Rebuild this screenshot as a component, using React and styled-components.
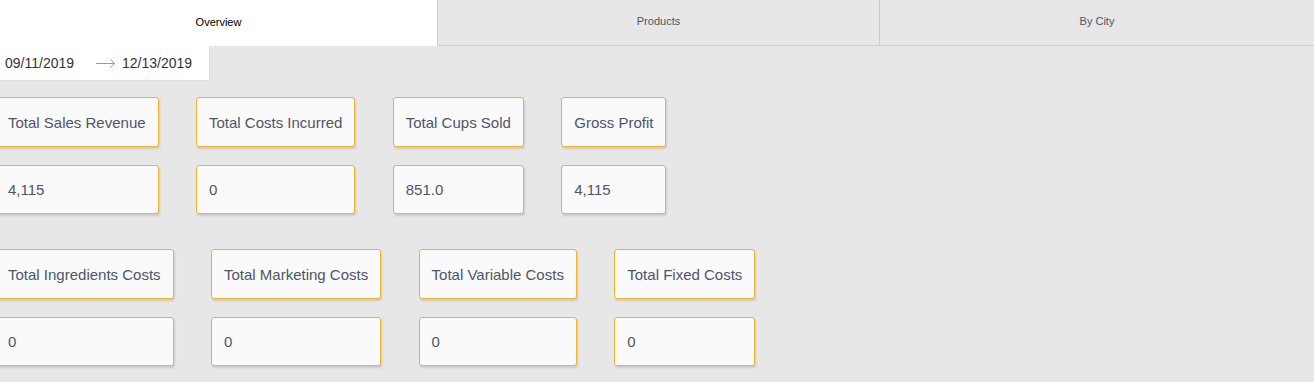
import React from "react";
import styled, { createGlobalStyle } from "styled-components";

const GlobalStyle = createGlobalStyle`
  html, body {
    margin: 0;
    padding: 0;
    background: #e6e7e6;
    font-family: "Liberation Sans", Arial, Helvetica, sans-serif;
    overflow: hidden;
  }
`;

const Page = styled.div`
  width: 1314px;
  height: 382px;
  background: #e6e7e6;
`;

const TabBar = styled.div`
  display: grid;
  grid-template-columns: 437px 442px 1fr;
  height: 46px;
`;

const Tab = styled.div`
  display: flex;
  align-items: center;
  justify-content: center;
  padding-bottom: 3px;
  box-sizing: border-box;
  font-size: 11px;
  color: ${(p) => (p.$active ? "#000" : "#4d5568")};
  background: ${(p) => (p.$active ? "#fff" : "#e6e7e6")};
  border-left: ${(p) => (p.$active ? "none" : "1px solid #f1d24e")};
  border-bottom: ${(p) => (p.$active ? "none" : "1px solid #f1d24e")};
`;

const Content = styled.div`
  margin-left: -5px;
  display: flex;
  flex-direction: column;
  align-items: flex-start;
`;

const DatePicker = styled.div`
  display: flex;
  align-items: center;
  width: 215px;
  height: 35px;
  box-sizing: border-box;
  padding: 0 10px;
  background: #fff;
  border: 1px solid #dcdcdc;
  border-left: none;
  border-top: none;
  font-size: 14px;
  color: #333;
`;

const Arrow = styled.svg`
  margin: 0 6px 0 22px;
  flex: none;
`;

const Groups = styled.div`
  display: flex;
  flex-direction: column;
  gap: 35px;
  margin-top: 16px;
`;

const Group = styled.div`
  display: flex;
  gap: 37.4px;
`;

const Column = styled.div`
  display: flex;
  flex-direction: column;
  gap: 18px;
`;

const Card = styled.div`
  box-sizing: border-box;
  height: ${(p) => (p.$value ? "49px" : "50px")};
  display: flex;
  align-items: center;
  padding: 0 12px;
  background: #fafafa;
  border: 1px solid #efb42c;
  border-radius: 3px;
  box-shadow: 1px 2px 2px rgba(0, 0, 0, 0.12);
  font-size: 15px;
  color: #4e5569;
  white-space: nowrap;
`;

const groups = [
  [
    ["Total Sales Revenue", "4,115"],
    ["Total Costs Incurred", "0"],
    ["Total Cups Sold", "851.0"],
    ["Gross Profit", "4,115"],
  ],
  [
    ["Total Ingredients Costs", "0"],
    ["Total Marketing Costs", "0"],
    ["Total Variable Costs", "0"],
    ["Total Fixed Costs", "0"],
  ],
];

export default function App() {
  return (
    <Page>
      <GlobalStyle />
      <TabBar>
        <Tab $active>Overview</Tab>
        <Tab>Products</Tab>
        <Tab>By City</Tab>
      </TabBar>
      <Content>
        <DatePicker>
          <span>09/11/2019</span>
          <Arrow width="20" height="10" viewBox="0 0 20 10">
            <path d="M0 5.5H18.5M14.5 1.5L18.5 5.5L14.5 9.5" fill="none" stroke="#999" strokeWidth="1" />
          </Arrow>
          <span>12/13/2019</span>
        </DatePicker>
        <Groups>
          {groups.map((g, gi) => (
            <Group key={gi}>
              {g.map(([label, value]) => (
                <Column key={label}>
                  <Card>{label}</Card>
                  <Card $value>{value}</Card>
                </Column>
              ))}
            </Group>
          ))}
        </Groups>
      </Content>
    </Page>
  );
}
